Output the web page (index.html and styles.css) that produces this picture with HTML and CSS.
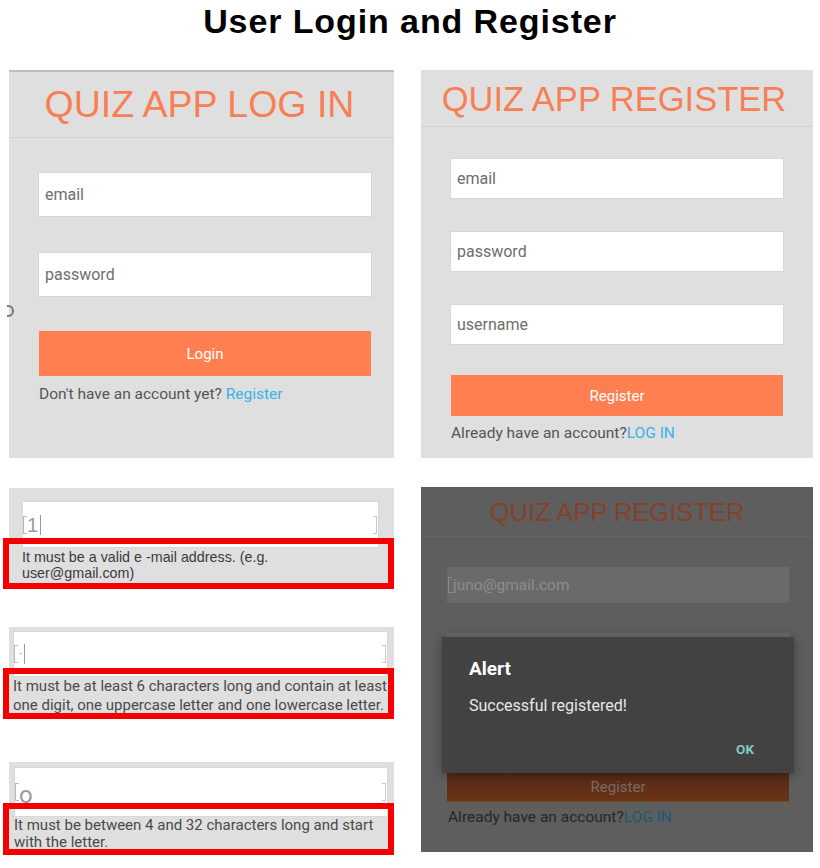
FILE: index.html
```html
<!DOCTYPE html>
<html lang="en">
<head>
<meta charset="utf-8">
<title>User Login and Register</title>
<link rel="stylesheet" href="styles.css">
</head>
<body>
<h1 class="page-title">User Login and Register</h1>

<div class="row top-row">
  <section class="panel login">
    <span class="edge-mark"></span>
    <header class="app-head login-head"><h2 class="app-title title-login">QUIZ APP LOG IN</h2></header>
    <div class="form login-form">
      <div class="field f-login">email</div>
      <div class="field f-login gap-login">password</div>
      <div class="btn btn-login">Login</div>
      <p class="switch switch-login">Don't have an account yet? <span class="link">Register</span></p>
    </div>
  </section>

  <section class="panel register">
    <header class="app-head reg-head"><h2 class="app-title title-reg">QUIZ APP REGISTER</h2></header>
    <div class="form reg-form">
      <div class="field f-reg">email</div>
      <div class="field f-reg gap-reg">password</div>
      <div class="field f-reg gap-reg">username</div>
      <div class="btn btn-reg">Register</div>
      <p class="switch switch-reg">Already have an account?<span class="link">LOG IN</span></p>
    </div>
  </section>
</div>

<div class="row bottom-row">
  <div class="errors">
    <div class="snip snip1">
      <div class="snip-input in1"><span class="sel-l"></span><span class="typed typed1">1</span><span class="caret"></span><span class="sel-r"></span></div>
      <p class="err err1">It must be a valid e -mail address. (e.g.<br>user@gmail.com)</p>
      <span class="mark mark1"></span>
    </div>

    <div class="snip snip2">
      <div class="snip-input in2"><span class="sel-l"></span><span class="typed typed2">·</span><span class="caret"></span><span class="sel-r"></span></div>
      <p class="err err2">It must be at least 6 characters long and contain at least<br>one digit, one uppercase letter and one lowercase letter.</p>
      <span class="mark mark2"></span>
    </div>

    <div class="snip snip3">
      <div class="snip-input in3"><span class="sel-l"></span><span class="typed typed3">o</span><span class="sel-r"></span><span class="knob"></span></div>
      <p class="err err3">It must be between 4 and 32 characters long and start<br>with the letter.</p>
      <span class="mark mark3"></span>
    </div>
  </div>

  <section class="panel dimmed">
    <header class="dim-head"><h2 class="dim-title">QUIZ APP REGISTER</h2></header>
    <div class="dim-form">
      <div class="dim-field"><span class="dim-sel"></span>juno@gmail.com</div>
      <div class="dim-field dim-gap"></div>
      <div class="dim-field dim-gap"></div>
      <div class="dim-btn">Register</div>
      <p class="dim-switch">Already have an account?<span class="dim-link">LOG IN</span></p>
    </div>
    <div class="dialog">
      <h3 class="dialog-title">Alert</h3>
      <p class="dialog-msg">Successful registered!</p>
      <div class="dialog-actions"><span class="dialog-ok">OK</span></div>
    </div>
  </section>
</div>
</body>
</html>
```

FILE: styles.css
```css
* { box-sizing: border-box; }

html, body {
  margin: 0;
  padding: 0;
  background: #ffffff;
}

body {
  width: 820px;
  height: 868px;
  overflow: hidden;
  font-family: Roboto, "Liberation Sans", Arial, sans-serif;
}

.page-title {
  margin: 0;
  height: 40px;
  padding-top: 1px;
  font-family: "Liberation Sans", Arial, sans-serif;
  font-weight: bold;
  font-size: 34px;
  letter-spacing: 0.9px;
  line-height: 40px;
  text-align: center;
  color: #000;
}

.row {
  display: flex;
}

.top-row {
  margin-top: 30px;
  padding-left: 9px;
  gap: 27px;
}

.panel {
  position: relative;
  background: #e0dfdf;
}

.login {
  width: 385px;
  height: 388px;
  border-top: 2px solid #bfbfbf;
}

.register {
  width: 392px;
  height: 388px;
}

.edge-mark {
  position: absolute;
  left: -2px;
  top: 233px;
  width: 7px;
  height: 12px;
  border: 2px solid #777;
  border-left: none;
  border-radius: 0 6px 6px 0;
}

.app-head {
  display: flex;
  align-items: center;
  justify-content: center;
  border-bottom: 1px solid #d0d0d0;
}

.login-head {
  height: 66px;
  padding-right: 4px;
}

.reg-head {
  height: 57px;
  padding-top: 2px;
  padding-right: 6px;
}

.app-title {
  margin: 0;
  font-family: "Liberation Sans", Arial, sans-serif;
  font-weight: normal;
  color: #f77f55;
  line-height: 1;
  white-space: nowrap;
}

.title-login { font-size: 37.5px; }
.title-reg { font-size: 34.5px; }

.login-form {
  padding: 34px 22px 0 29px;
}

.reg-form {
  padding: 31px 29px 0 29px;
}

.field {
  background: #ffffff;
  border: 1px solid #d6d6d6;
  color: #6e6e6e;
  font-size: 16px;
  display: flex;
  align-items: center;
  padding-left: 6px;
}

.f-login { height: 45px; }
.gap-login { margin-top: 35px; }
.f-reg { height: 41px; }
.gap-reg { margin-top: 32px; }

.btn {
  background: #ff7f50;
  color: #ffffff;
  display: flex;
  align-items: center;
  justify-content: center;
  font-size: 15px;
}

.btn-login {
  height: 45px;
  margin-top: 34px;
  margin-right: 1px;
  margin-left: 1px;
}

.btn-reg {
  height: 41px;
  margin-top: 30px;
  margin-left: 1px;
  margin-right: 1px;
}

.switch {
  margin: 0;
  height: 20px;
  line-height: 20px;
  font-size: 15.5px;
  color: #555555;
  white-space: nowrap;
}

.switch-login { margin-top: 8px; padding-left: 1px; }
.switch-reg { margin-top: 7px; padding-left: 1px; }

.link { color: #35b4ea; }

/* bottom row */
.bottom-row {
  margin-top: 29px;
  padding-left: 3px;
  gap: 27px;
}

.errors {
  width: 391px;
  padding-top: 1px;
}

.snip {
  position: relative;
  margin-left: 6px;
  width: 385px;
  background: #e0dfdf;
}

.snip1 { padding: 13px 15px 2px 13px; }
.snip2 { margin-top: 44px; padding: 4px 6px 0 4px; }
.snip3 { margin-top: 47px; padding: 5px 6px 0 5px; }

.snip-input {
  position: relative;
  background: #ffffff;
  border: 1px solid #d8d8d8;
  display: flex;
  align-items: center;
}

.in1 { height: 47px; }
.in2 { height: 46px; }
.in3 { height: 50px; }

.sel-l {
  width: 4px;
  height: 18px;
  border: 1px solid #b8b8b8;
  border-right: none;
  margin-left: 0;
}

.sel-r {
  position: absolute;
  right: 1px;
  top: 50%;
  width: 4px;
  height: 18px;
  margin-top: -9px;
  border: 1px solid #c8c8c8;
  border-left: none;
}

.typed {
  color: #9a9a9a;
  line-height: 1;
}

.typed1 {
  font-family: "Liberation Sans", Arial, sans-serif;
  font-size: 20px;
}

.typed2 {
  font-size: 12px;
  margin-left: 1px;
}

.typed3 {
  font-size: 24px;
  margin-top: 6px;
}

.caret {
  width: 1px;
  height: 20px;
  margin-left: 2px;
  background: #9a9a9a;
}

.knob {
  position: absolute;
  left: 12px;
  top: 35px;
  width: 7px;
  height: 5px;
  background: #333;
}

.err {
  margin: 0;
  color: #3a3a3a;
  white-space: nowrap;
}

.err1 {
  font-family: "Liberation Sans", Arial, sans-serif;
  font-size: 14.3px;
  line-height: 16px;
  padding-top: 1px;
}

.err2 {
  font-size: 15px;
  line-height: 19px;
  color: #4a4a4a;
}

.err3 {
  font-size: 15px;
  line-height: 17px;
  color: #4a4a4a;
  padding-bottom: 2px;
}

.mark {
  position: absolute;
  left: -6px;
  width: 391px;
  border: 6px solid #f50000;
  pointer-events: none;
}

.mark1 { top: 50px; height: 51px; }
.mark2 { top: 41px; height: 51px; }
.mark3 { top: 41px; height: 52px; }

/* dimmed register with alert */
.dimmed {
  width: 392px;
  height: 365px;
  background: #5e5e5e;
}

.dim-head {
  height: 50px;
  border-bottom: 1px solid #666666;
  display: flex;
  align-items: center;
  justify-content: center;
  padding-top: 3px;
}

.dim-title {
  margin: 0;
  font-family: "Liberation Sans", Arial, sans-serif;
  font-weight: normal;
  font-size: 25.5px;
  color: #86402a;
  line-height: 1;
}

.dim-form {
  padding: 30px 24px 0 26px;
}

.dim-field {
  height: 36px;
  background: #6a6a6a;
  color: #8e8e8e;
  font-size: 15.5px;
  display: flex;
  align-items: center;
  padding-left: 1px;
}

.dim-sel {
  width: 4px;
  height: 16px;
  border: 1px solid #8a8a8a;
  border-right: none;
  margin-right: 1px;
}

.dim-gap { margin-top: 30px; }

.dim-btn {
  height: 30px;
  margin-top: 37px;
  background: linear-gradient(#552818, #6a3417);
  border-bottom: 1px solid #7a4a20;
  color: #7d6a64;
  font-size: 15px;
  display: flex;
  align-items: center;
  justify-content: center;
}

.dim-switch {
  margin: 5px 0 0 1px;
  height: 20px;
  line-height: 20px;
  font-size: 15.5px;
  color: #262626;
  white-space: nowrap;
}

.dim-link { color: #1d5a72; }

.dialog {
  position: absolute;
  left: 21px;
  top: 150px;
  width: 352px;
  height: 136px;
  background: #424242;
  box-shadow: 0 2px 10px rgba(0, 0, 0, 0.35);
  padding: 20px 40px 14px 27px;
}

.dialog-title {
  margin: 0;
  font-size: 19px;
  font-weight: bold;
  line-height: 24px;
  color: #ffffff;
}

.dialog-msg {
  margin: 14px 0 0 0;
  font-size: 16px;
  line-height: 22px;
  color: #e8e8e8;
}

.dialog-actions {
  margin-top: 22px;
  display: flex;
  justify-content: flex-end;
  height: 20px;
  line-height: 20px;
}

.dialog-ok {
  font-size: 13.5px;
  font-weight: bold;
  color: #80cbc4;
}
```
